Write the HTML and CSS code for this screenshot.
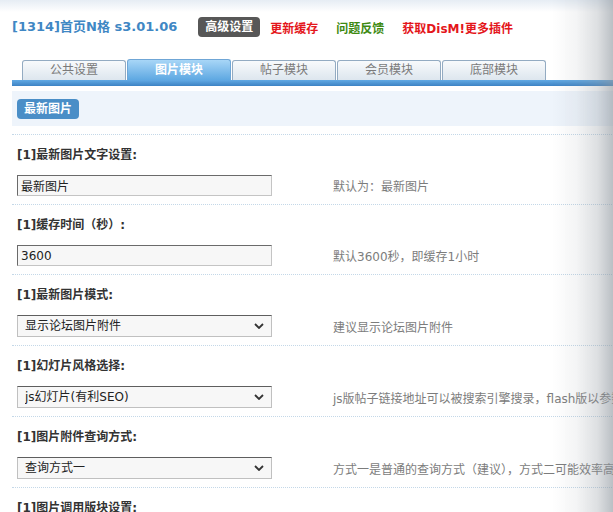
FILE: index.html
```html
<!DOCTYPE html>
<html lang="zh-CN">
<head>
  <meta charset="UTF-8">
  <title>首页N格 - 高级设置</title>
  <link rel="stylesheet" href="styles.css">
</head>
<body>
  <div class="edge-shade"></div>
  <div class="page">
    <div class="header">
      <h1 class="title">[1314]首页N格 s3.01.06</h1>
      <span class="badge">高级设置</span>
      <a class="link red" href="#">更新缓存</a>
      <a class="link green" href="#">问题反馈</a>
      <a class="link red" href="#">获取DisM!更多插件</a>
    </div>

    <div class="tabs">
      <a class="tab" href="#">公共设置</a>
      <a class="tab active" href="#">图片模块</a>
      <a class="tab" href="#">帖子模块</a>
      <a class="tab" href="#">会员模块</a>
      <a class="tab" href="#">底部模块</a>
    </div>
    <div class="tab-bar"></div>

    <div class="section-head">
      <span class="section-btn">最新图片</span>
    </div>

    <div class="rows">
      <div class="row">
        <div class="label">[1]最新图片文字设置:</div>
        <div class="field">
          <input class="text-input" type="text" value="最新图片">
          <span class="hint">默认为：最新图片</span>
        </div>
      </div>
      <div class="row">
        <div class="label">[1]缓存时间（秒）:</div>
        <div class="field">
          <input class="text-input" type="text" value="3600">
          <span class="hint">默认3600秒，即缓存1小时</span>
        </div>
      </div>
      <div class="row">
        <div class="label">[1]最新图片模式:</div>
        <div class="field">
          <div class="select-wrap">
            <select class="select"><option>显示论坛图片附件</option></select>
            <svg class="chevron" viewBox="0 0 10 6" width="10" height="6"><path d="M1 1 L5 5 L9 1" fill="none" stroke="#333" stroke-width="1.8"/></svg>
          </div>
          <span class="hint">建议显示论坛图片附件</span>
        </div>
      </div>
      <div class="row">
        <div class="label">[1]幻灯片风格选择:</div>
        <div class="field">
          <div class="select-wrap">
            <select class="select"><option>js幻灯片(有利SEO)</option></select>
            <svg class="chevron" viewBox="0 0 10 6" width="10" height="6"><path d="M1 1 L5 5 L9 1" fill="none" stroke="#333" stroke-width="1.8"/></svg>
          </div>
          <span class="hint">js版帖子链接地址可以被搜索引擎搜录，flash版以参数形式传递图片地址</span>
        </div>
      </div>
      <div class="row">
        <div class="label">[1]图片附件查询方式:</div>
        <div class="field">
          <div class="select-wrap">
            <select class="select"><option>查询方式一</option></select>
            <svg class="chevron" viewBox="0 0 10 6" width="10" height="6"><path d="M1 1 L5 5 L9 1" fill="none" stroke="#333" stroke-width="1.8"/></svg>
          </div>
          <span class="hint">方式一是普通的查询方式（建议），方式二可能效率高一些</span>
        </div>
      </div>
      <div class="row">
        <div class="label">[1]图片调用版块设置:</div>
        <div class="field">
          <div class="select-wrap">
            <select class="select"><option>全部版块</option></select>
            <svg class="chevron" viewBox="0 0 10 6" width="10" height="6"><path d="M1 1 L5 5 L9 1" fill="none" stroke="#333" stroke-width="1.8"/></svg>
          </div>
          <span class="hint">选择需要调用图片的版块</span>
        </div>
      </div>
    </div>
  </div>
</body>
</html>
```

FILE: styles.css
```css
html, body {
  margin: 0;
  padding: 0;
  height: 100%;
  overflow: hidden;
}
body {
  background: linear-gradient(#e6edf4 0, #fff 12px) no-repeat #fff;
  font-family: "DejaVu Sans", "Noto Sans CJK SC", sans-serif;
  font-size: 12px;
  color: #333;
}
.edge-shade {
  position: fixed;
  top: 0;
  right: 0;
  bottom: 0;
  width: 60px;
  pointer-events: none;
  z-index: 10;
  background: linear-gradient(to right, rgba(140,148,156,0) 0, rgba(140,148,156,0.1) 40%, rgba(140,148,156,0.3) 75%, rgba(140,148,156,0.6) 100%);
}
.page {
  padding-left: 12px;
  width: 1000px;
}
.header {
  display: flex;
  align-items: center;
  height: 20px;
  padding-top: 17px;
}
.title {
  margin: 0 21px 0 0;
  font-size: 13px;
  font-weight: bold;
  color: #3f87c4;
  line-height: 20px;
}
.badge {
  background: #575757;
  color: #fff;
  font-weight: bold;
  font-size: 12px;
  line-height: 20px;
  padding: 0 7px;
  border-radius: 4px;
  margin-right: 10px;
}
.link {
  font-weight: bold;
  text-decoration: none;
  margin-right: 18px;
}
.link.red { color: #e4161b; }
.link.green { color: #3e8a12; }

.tabs {
  display: flex;
  align-items: flex-end;
  gap: 1px;
  height: 22px;
  margin-top: 21px;
  padding-left: 10px;
}
.tab {
  box-sizing: border-box;
  width: 104px;
  height: 20px;
  line-height: 19px;
  text-align: center;
  text-decoration: none;
  color: #7a7a7a;
  border: 1px solid #93abc2;
  border-bottom: none;
  border-radius: 3px 3px 0 0;
  background: linear-gradient(#f8fafc, #dde6ee);
}
.tab.active {
  height: 21px;
  line-height: 20px;
  color: #fff;
  font-weight: bold;
  border-color: #6fa6d6;
  background: linear-gradient(#a8d6f7, #5ea8e2);
}
.tab-bar {
  height: 6px;
  background: linear-gradient(#62aae4, #3d83c4);
}
.section-head {
  margin-top: 5px;
  height: 35px;
  background: #eef4fb;
  padding: 8px 5px 0;
  box-sizing: border-box;
}
.section-btn {
  display: inline-block;
  background: #4a8ec7;
  color: #fff;
  font-weight: bold;
  line-height: 20px;
  padding: 0 7px;
  border-radius: 4px;
}

.rows {
  margin-top: 8px;
}
.row {
  border-top: 1px dotted #c4d8e8;
  padding: 11px 5px 8px;
}
.label {
  font-weight: bold;
  line-height: 18px;
}
.field {
  display: flex;
  align-items: center;
  margin-top: 11px;
  white-space: nowrap;
}
.text-input {
  box-sizing: border-box;
  width: 255px;
  height: 21px;
  margin: 0;
  padding: 0 3px;
  font: inherit;
  color: #222;
  background: #f7f7f7;
  border: 1px solid #c4c4c4;
  border-top-color: #6a6a6a;
  border-left-color: #6a6a6a;
}
.select-wrap {
  position: relative;
  width: 255px;
  height: 22px;
}
.select {
  appearance: none;
  box-sizing: border-box;
  width: 100%;
  height: 100%;
  margin: 0;
  padding: 0 7px;
  font: inherit;
  color: #222;
  background: #f7f7f7;
  border: 1px solid #c0c0c0;
  border-top-color: #5e5e5e;
  border-radius: 0;
}
.chevron {
  position: absolute;
  right: 8px;
  top: 8px;
  pointer-events: none;
}
.hint {
  margin-left: 61px;
  color: #7c7c7c;
}
```
